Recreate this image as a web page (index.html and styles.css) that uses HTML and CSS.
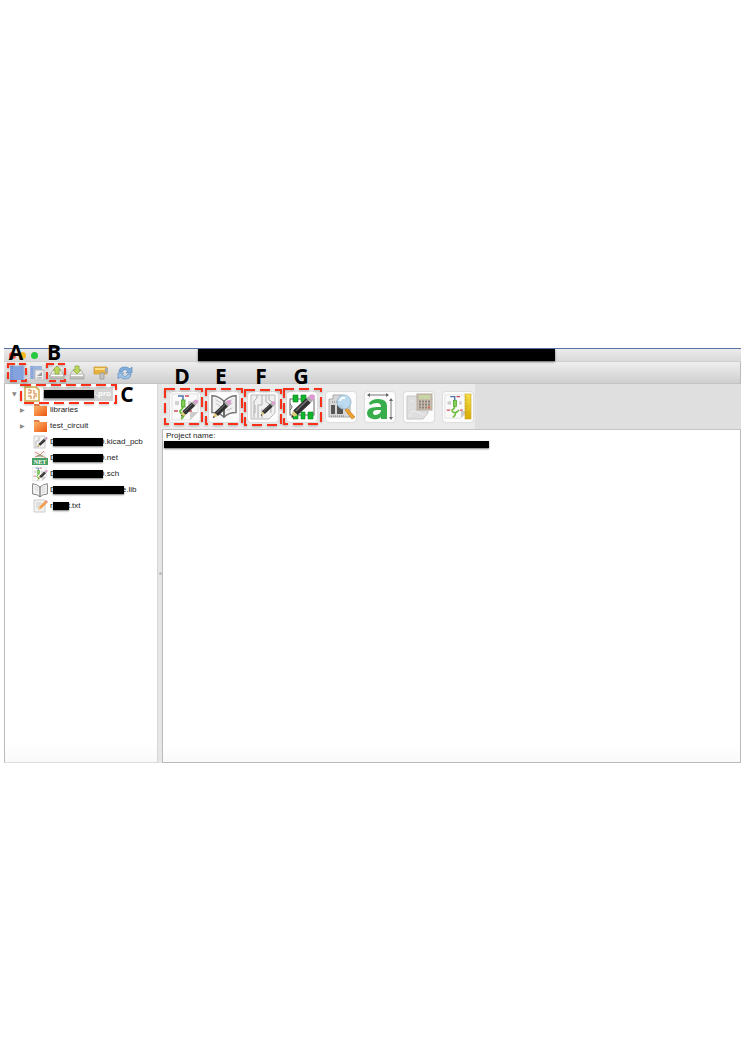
FILE: index.html
```html
<!DOCTYPE html>
<html lang="en">
<head>
<meta charset="utf-8">
<title>Project manager</title>
<link rel="stylesheet" href="styles.css">
</head>
<body>
<svg class="defs" width="0" height="0" aria-hidden="true">
  <defs>
    <linearGradient id="folder" x1="0" y1="0" x2="1" y2="1"><stop offset="0" stop-color="#ffb56b"/><stop offset="1" stop-color="#e9560f"/></linearGradient>
    <linearGradient id="ruler" x1="0" y1="0" x2="0" y2="1"><stop offset="0" stop-color="#f7e04a"/><stop offset="1" stop-color="#d9ab00"/></linearGradient>
    <linearGradient id="metal" x1="0" y1="0" x2="0" y2="1"><stop offset="0" stop-color="#f5f5f3"/><stop offset="1" stop-color="#b4b4b0"/></linearGradient>
    <symbol id="pencil" viewBox="0 0 20 20">
      <path d="M1 19 2.500 13.500 6 17Z" fill="#e3cd7c"/>
      <path d="M1 19 1.600 17 3 18.300Z" fill="#222"/>
      <path d="M2.500 13.500 12.500 4 16 7.500 6 17Z" fill="#303030"/>
      <path d="M4.500 13.800 13.500 5.200" stroke="#777"/>
      <path d="M12.500 4 14 2.600 17.500 6.100 16 7.500Z" fill="#aaa"/>
      <path d="M14 2.600Q16.500 0 18.500 1.500T17.500 6.100Z" fill="#dc9bd0"/>
    </symbol>
    <symbol id="circuit" viewBox="0 0 28 28">
      <path d="M1 1H27V19L19 27H1Z" fill="#fafafa" stroke="#e0e0e0"/>
      <path d="M27 19H19V27Z" fill="#ccc"/>
      <path d="M7 3H12V7" fill="none" stroke="#4a72ac" stroke-width="1.500"/>
      <path d="M12 14Q12 16 9 18 9 21 13 21 13 24 10 26M13 21 17 18" fill="none" stroke="#6fbd3c" stroke-width="1.800"/>
      <rect x="10.500" y="7" width="3.500" height="7" fill="#83cf57" stroke="#4aa028" stroke-width=".8"/>
      <path d="M4 9H8M4 11H8M17 9H20M17 11H20" stroke="#aaa"/>
      <path d="M14 3H18M3 18H7M18 18H21" stroke="#d04b58" stroke-width="1.500"/>
    </symbol>
    <symbol id="book" viewBox="0 0 28 28">
      <path d="M1 3Q8 3 14 9 20 3 27 3V21Q19 21 14 26 9 21 1 21Z" fill="#f2f2f2" stroke="#777" stroke-width="1.500"/>
      <path d="M14 8V26" stroke="#666" stroke-width="2"/>
      <path d="M5 7 11 11M5 11 11 15M17 11 23 7M17 15 23 11M17 19 23 16" stroke="#bbb"/>
    </symbol>
    <symbol id="disk" viewBox="0 0 16 16">
      <path d="M1 10 4 5H12L15 10V14H1Z" fill="url(#metal)" stroke="#a8a8a4" stroke-width=".8"/>
      <path d="M2 10.500H14" stroke="#fff"/>
    </symbol>
  </defs>
</svg>

<main class="window">
  <header class="titlebar">
    <i class="light red"></i><i class="light amber"></i><i class="light green"></i>
    <span class="redact title-redact"></span>
  </header>

  <nav class="toolbar" aria-label="Project">
    <button class="tool" aria-label="New project"><svg viewBox="0 0 16 16"><rect x="1" y="1" width="14" height="14" fill="#84a3de"/><path d="M3 1V15" stroke="#577dbd" stroke-dasharray="1 1"/><path d="M4 1H15V15" fill="none" stroke="#a9c0ed"/></svg></button>
    <button class="tool" aria-label="New project from template"><svg viewBox="0 0 16 16"><rect x="1" y="1" width="12" height="13" fill="#9bb3df"/><path d="M3 1V14" stroke="#6686bf" stroke-dasharray="1 1"/><path d="M6 5H15V15H6Z" fill="#eee" stroke="#bbb"/><path d="M8 13H13" stroke="#999"/><path d="M8 11 13 7V11Z" fill="#999"/></svg></button>
    <button class="tool" aria-label="Open project"><svg viewBox="0 0 16 16"><use href="#disk"/><path d="M8 1 12 5H10V9H6V5H4Z" fill="#bcd95c" stroke="#8cab3c" stroke-width=".8"/></svg></button>
    <button class="tool" aria-label="Save project"><svg viewBox="0 0 16 16"><use href="#disk"/><path d="M6 1H10V5H12L8 9 4 5H6Z" fill="#bcd95c" stroke="#8cab3c" stroke-width=".8"/></svg></button>
    <button class="tool spaced" aria-label="Archive project"><svg viewBox="0 0 16 16"><path d="M1 2H14V9H1Z" fill="#e7b13c" stroke="#cf9d3a" stroke-width=".8"/><path d="M2 3H13V5H2Z" fill="#ffe08a"/><path d="M7 8H11V14H7Z" fill="#c4c4c4" stroke="#999" stroke-width=".8"/><path d="M12 3H15V8H12Z" fill="#aaa"/></svg></button>
    <button class="tool spaced" aria-label="Refresh"><svg viewBox="0 0 16 16"><path d="M2 7Q2 2 8 2 11 2 13 4L15 2V8H9L11 6Q7 3 5 7Z" fill="#7faedb" stroke="#5585ba" stroke-width=".6"/><path d="M14 9Q14 14 8 14 5 14 3 12L1 14V8H7L5 10Q9 13 11 9Z" fill="#9dc3e6" stroke="#5585ba" stroke-width=".6"/></svg></button>
  </nav>

  <div class="panes">
    <aside class="tree" aria-label="Project files">
      <div class="row root">
        <span class="arrow">▼</span>
        <svg viewBox="0 0 16 16"><path d="M1 1H12L15 4V15H1Z" fill="#fffbe8" stroke="#cdaa4c" stroke-width="1.500"/><path d="M4 4H7V7H4M10 4V8H13M4 10H7V13M10 13V10H13" fill="none" stroke="#d07a4e"/></svg>
        <span class="label selected"><span class="redact w50"></span><span class="tail">D.pro</span></span>
      </div>
      <div class="row"><span class="arrow">▶</span><svg viewBox="0 0 16 16"><path d="M2 2H7L8 4H15V14H2Z" fill="#e08048"/><path d="M2 4H15V14H2Z" fill="url(#folder)"/></svg><span class="label">libraries</span></div>
      <div class="row"><span class="arrow">▶</span><svg viewBox="0 0 16 16"><path d="M2 2H7L8 4H15V14H2Z" fill="#e08048"/><path d="M2 4H15V14H2Z" fill="url(#folder)"/></svg><span class="label">test_circuit</span></div>
      <div class="row"><span class="arrow"></span><svg viewBox="0 0 16 16"><path d="M2 2H13V14H2Z" fill="#f3f3f3" stroke="#ccc"/><path d="M4 14V7H7V3" fill="none" stroke="#bbb"/><use href="#pencil" x="5" y="2" width="11" height="12"/></svg><span class="label">D<span class="redact w50"></span><span class="tail">D.kicad_pcb</span></span></div>
      <div class="row"><span class="arrow"></span><svg viewBox="0 0 16 16"><path d="M2 1H14V9H2Z" fill="#f4f4f4"/><path d="M3 2 8 5 14 8M3 7 8 5 12 1" fill="none" stroke="#d06f62" stroke-width=".8"/><path d="M5 6H11" stroke="#6a9b62"/><rect x="0" y="8" width="16" height="7" fill="#4a9f62"/><text x="8" y="14" class="net">NET</text></svg><span class="label">D<span class="redact w50"></span><span class="tail">D.net</span></span></div>
      <div class="row"><span class="arrow"></span><svg viewBox="0 0 16 16"><use href="#circuit" width="15" height="16"/><use href="#pencil" x="6" y="3" width="10" height="11"/></svg><span class="label">D<span class="redact w50"></span><span class="tail">D.sch</span></span></div>
      <div class="row"><span class="arrow"></span><svg viewBox="0 0 16 16"><use href="#book" width="16" height="16"/></svg><span class="label">D<span class="redact w71"></span><span class="tail short">e.lib</span></span></div>
      <div class="row"><span class="arrow"></span><svg viewBox="0 0 16 16"><path d="M2 2H13V14H2Z" fill="#f3f3f3" stroke="#ccc"/><path d="M4 5H10M4 7H9M4 9H8" stroke="#ccc"/><path d="M6 12 7 9 13 3 15 5 9 11Z" fill="#f0a04d"/><path d="M6 12 7 9 9 11Z" fill="#f2d6aa"/><path d="M13 3 14 2 16 4 15 5Z" fill="#e8837a"/></svg><span class="label">r<span class="redact w16"></span><span class="tail">t.txt</span></span></div>
    </aside>

    <div class="splitter"><i></i></div>

    <section class="work">
      <div class="launch">
        <div class="launch-tools">
          <button class="app" aria-label="Schematic editor"><svg viewBox="0 0 28 28"><use href="#circuit" width="28" height="28"/><use href="#pencil" x="9" y="5" width="19" height="20"/></svg></button>
          <button class="app" aria-label="Library editor"><svg viewBox="0 0 28 28"><use href="#book" width="28" height="26"/><use href="#pencil" x="2" y="6" width="20" height="20"/></svg></button>
          <button class="app" aria-label="Board editor"><svg viewBox="0 0 28 28"><path d="M2 2H26V20L20 26H2Z" fill="#f0f0f0" stroke="#bbb"/><path d="M5 25V8L8 5V2M9 25V12H13V2M13 25V16M17 2V9L22 12V20M20 2V7L25 10M6 12V20" fill="none" stroke="#b0b0b0"/><use href="#pencil" x="11" y="6" width="16" height="19"/></svg></button>
          <button class="app" aria-label="Footprint editor"><svg viewBox="0 0 28 28"><rect x="2" y="6" width="24" height="16" fill="#fff" stroke="#666"/><path d="M2 11Q6 14 2 17" fill="none" stroke="#666"/><path d="M5 2H10V9H5ZM13 2H18V9H13ZM5 19H10V26H5ZM13 19H17V26H13ZM20 19H25V26H20Z" fill="#10b52b" stroke="#0b8520" stroke-width=".6"/><use href="#pencil" x="2" y="0" width="26" height="26"/></svg></button>
          <button class="app" aria-label="Gerber viewer"><svg viewBox="0 0 28 28"><path d="M2 6H6V2H16L23 8V24H2Z" fill="#d7d7d7" stroke="#aaa"/><path d="M4 12H8V21H4ZM10 12H16V21H10Z" fill="#555"/><path d="M5 9H14M4 23H17" stroke="#777" stroke-dasharray="1 1"/><path d="M18 17 20 15 28 24 25 26Z" fill="#efa12d" stroke="#bd8028" stroke-width=".7"/><circle cx="17" cy="9" r="7" fill="#b9dcf3" fill-opacity=".9" stroke="#9dbdd5"/><path d="M13 8Q14 4 18 5" fill="none" stroke="#fff" stroke-width="2"/></svg></button>
          <button class="app" aria-label="Bitmap converter"><svg viewBox="0 0 28 28"><path d="M3 2H21M25 7V25" stroke="#777"/><path d="M1 2 4 0V4ZM23 2 20 0V4ZM25 5 23 8H27ZM25 27 23 24H27Z" fill="#666"/><path d="M3 10Q6 6 12 6 21 6 21 13V26H15V24Q12 27 7 26 1 25 1 20 1 14 11 14H15Q15 10 11 10 7 10 4 12ZM15 17H11Q7 17 7 20 7 22 10 22 15 21 15 17Z" fill="#37ad4b" fill-rule="evenodd"/></svg></button>
          <button class="app" aria-label="Calculator"><svg viewBox="0 0 28 28"><path d="M2 3H23V20L18 26H2Z" fill="#dedede" stroke="#c8c8c8"/><path d="M4 24Q6 16 12 19T20 22M6 8H9" fill="none" stroke="#eee"/><rect x="12" y="1" width="15" height="16" fill="#c9bdae" stroke="#b5aa9d"/><rect x="14" y="2" width="11" height="4" fill="#c9d5a2"/><path d="M14 8.500H25M14 11.500H25M14 14.500H25" stroke="#8d837c" stroke-width="2" stroke-dasharray="2 1"/><path d="M23 14.500H25" stroke="#d96c4d" stroke-width="2"/></svg></button>
          <button class="app" aria-label="Page layout editor"><svg viewBox="0 0 28 28"><use href="#circuit" y="1" width="25" height="25"/><rect x="21" y="1" width="6" height="25" fill="url(#ruler)" stroke="#cfae34" stroke-width=".7"/><path d="M21 4H23M21 7H24M21 10H23M21 13H24M21 16H23M21 19H24M21 22H23" stroke="#b69a2b" stroke-width=".6"/></svg></button>
        </div>
      </div>
      <div class="messages">
        <p>Project name:</p>
        <span class="redact path-redact"></span>
      </div>
    </section>
  </div>

  <div class="notes">
    <svg class="frames" viewBox="0 0 330 90" width="330" height="90" aria-hidden="true">
      <rect class="small" x="4" y="16" width="18" height="17"/>
      <rect class="small" x="43" y="16" width="18" height="17"/>
      <rect x="17" y="37" width="95" height="18"/>
      <rect x="161" y="41" width="37" height="35"/>
      <rect x="202" y="41" width="36" height="35"/>
      <rect x="241" y="42" width="36" height="35"/>
      <rect x="280" y="41" width="37" height="35"/>
    </svg>
    <b class="a">A</b><b class="b">B</b><b class="c">C</b><b class="d">D</b><b class="e">E</b><b class="f">F</b><b class="g">G</b>
  </div>
</main>
</body>
</html>
```
FILE: styles.css
```css
* { box-sizing: border-box; }
body {
  margin: 0;
  padding: 348px 4px 0;
  background: #fff;
  color: #222;
  font: 8px/16px "Liberation Sans", Arial, sans-serif;
}
p { margin: 0; }
button { padding: 0; border: 0; background: none; }
svg { display: block; }
.defs { position: absolute; }
.window { position: relative; }

.titlebar {
  display: flex;
  align-items: flex-start;
  height: 14px;
  border-top: 1px solid #5874a6;
  border-bottom: 1px solid #cfcfcf;
  background: linear-gradient(#ebebeb, #dadada);
}
.light { width: 7px; height: 7px; margin: 3px 0 0 5px; border-radius: 50%; }
.light + .light { margin-left: 3px; }
.red { background: #f25045; }
.amber { background: #fdb924; }
.light.green { margin-left: 5px; background: #28c840; }
.redact {
  display: inline-block;
  flex: none;
  position: relative;
  background: #000;
  box-shadow: 0 1px 2px #0008;
}
.title-redact { width: 357px; height: 12px; margin-left: 160px; }

.toolbar {
  display: flex;
  align-items: center;
  gap: 4px;
  height: 22px;
  padding-left: 5px;
  border-right: 1px solid #bbb;
  border-bottom: 1px solid #c2c2c2;
  background: linear-gradient(#eee, #cfcfcf);
}
.tool { width: 16px; height: 16px; }
.tool svg { width: 16px; height: 16px; }
.spaced { margin-left: 4px; }

.panes { display: flex; min-height: 379px; }
.tree {
  flex: none;
  width: 153px;
  padding: 2px 0 0 7px;
  border-left: 1px solid #bbb;
  border-bottom: 1px solid #ddd;
  background: linear-gradient(#fff 95%, #f9f9f9);
}
.row { display: flex; align-items: center; height: 16px; padding-left: 8px; }
.row svg { flex: none; width: 16px; height: 16px; margin-right: 2px; }
.root { padding-left: 0; }
.root svg { margin: 0 3px 0 0; }
.arrow { flex: none; width: 12px; color: #888; font: 6px/16px "DejaVu Sans", sans-serif; }
.label { display: flex; align-items: center; white-space: nowrap; }
.label .redact { height: 8px; margin-left: -3px; }
.label.selected { padding: 0 2px 0 1px; background: #d3d3d3; color: #fff; line-height: 14px; font-weight: bold; }
.selected .redact { margin-left: 0; }
.w50 { width: 50px; }
.w71 { width: 71px; }
.label .w16 { width: 16px; margin-left: 0; }
.tail { margin-left: -4px; }
.tail.short { margin-left: -2px; }
.w16 + .tail { margin-left: -1px; }
.net { fill: #fff; font: bold 6px "Liberation Serif", serif; text-anchor: middle; }

.splitter {
  display: flex;
  align-items: center;
  justify-content: center;
  flex: none;
  width: 5px;
  border-left: 1px solid #d5d5d5;
  background: #e6e6e6;
}
.splitter i { width: 3px; height: 3px; border-radius: 50%; background: #bbb; }
.work { display: flex; flex: 1; flex-direction: column; min-width: 0; }
.launch { height: 46px; border-bottom: 1px solid #c4c4c4; background: #dfdfdf; }
.launch-tools {
  display: flex;
  align-items: center;
  gap: 9px;
  width: max-content;
  height: 45px;
  padding: 0 2px 0 8px;
  background: #ebebeb;
}
.app {
  display: grid;
  place-items: center;
  width: 30px;
  height: 30px;
  border-radius: 3px;
  background: #fcfcfc;
  box-shadow: 0 0 2px #bbb;
}
.app svg { width: 28px; height: 28px; }
.messages {
  flex: 1;
  padding: 0 1px;
  border: solid #bbb;
  border-width: 0 1px 1px;
  background: linear-gradient(#fff 95%, #f9f9f9);
}
.messages p { padding: 1px 0 0 2px; line-height: 10px; }
.path-redact { display: block; width: 325px; height: 7px; }

.notes { position: absolute; top: 0; left: 0; pointer-events: none; color: #000; }
.frames { fill: none; stroke: #fa3019; stroke-width: 2; stroke-dasharray: 10 5; filter: drop-shadow(0 1px 1px #0004); }
.small { stroke-dasharray: 7 4; }
.notes b { position: absolute; width: 20px; text-align: center; font: 700 21px/20px "Open Sans", sans-serif; }
.a { left: 2px; top: -6px; }
.b { left: 40px; top: -6px; }
.c { left: 113px; top: 36px; }
.d { left: 168px; top: 18px; }
.e { left: 207px; top: 18px; }
.f { left: 247px; top: 18px; }
.g { left: 287px; top: 18px; }
```
